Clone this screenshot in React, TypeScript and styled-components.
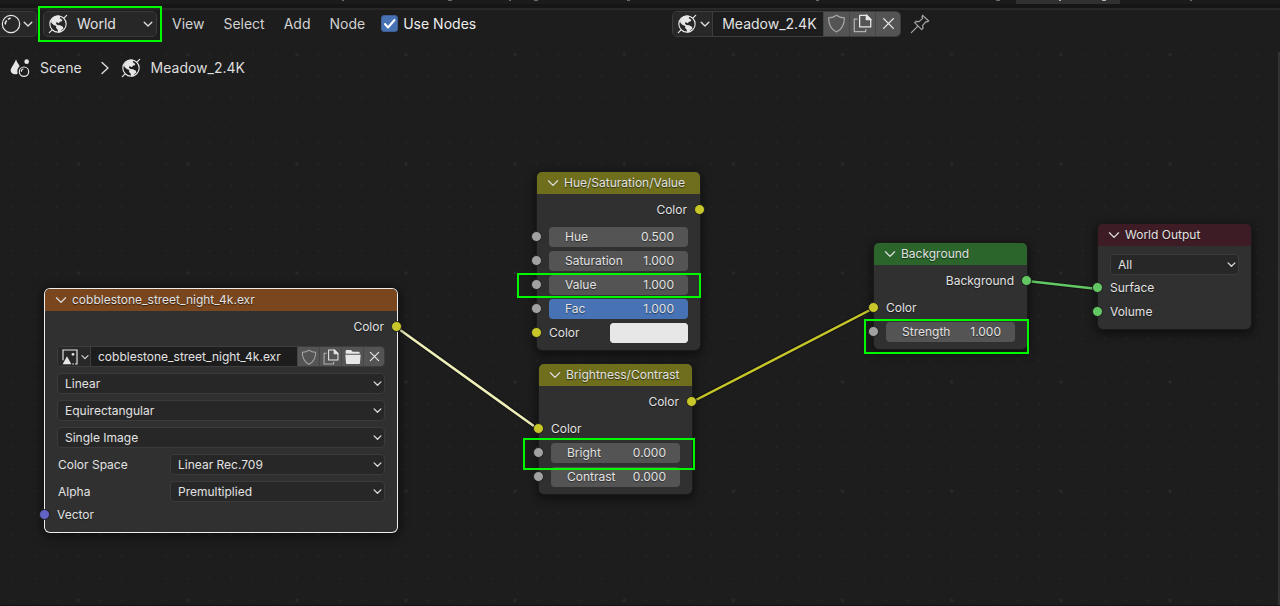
import React, { useId } from "react";
import styled, { createGlobalStyle, css } from "styled-components";

const font = `Inter, "Liberation Sans", sans-serif`;

const GlobalStyle = createGlobalStyle`
  *, *::before, *::after { box-sizing: border-box; }
  body { margin: 0; background: #1d1d1d; overflow: hidden; }
  button, input, select { font: inherit; color: inherit; margin: 0; }
`;

const Screen = styled.div`
  display: flex;
  flex-direction: column;
  min-height: 100vh;
  overflow: hidden;
  background: #161616;
  color: #e2e2e2;
  font: 14px/20px ${font};
`;

const WorkspaceStrip = styled.div`
  height: 4px;
  margin-bottom: 4px;
  background: #1b1b1b;
  svg { display: block; }
`;

const Editor = styled.main`
  flex: 1;
  display: flex;
  flex-direction: column;
  background: #1d1d1d;
  border-top: 2px solid #282828;
  border-bottom: 1px solid #141114;
`;

const Toolbar = styled.header`
  display: flex;
  align-items: center;
  height: 30px;
  padding-bottom: 3px;
`;

const EditorTypeButton = styled.button`
  display: flex;
  align-items: center;
  gap: 2px;
  width: 37px;
  height: 26px;
  padding: 0 2px 0 1px;
  border: 1px solid #3a3a3a;
  border-left: 0;
  border-radius: 0 5px 5px 0;
  background: #282828;
`;

const ShaderType = styled.div`
  position: relative;
  width: 114px;
  margin-left: 6px;
`;

const SelectBox = styled.select<{ $large?: boolean }>`
  display: block;
  width: 100%;
  height: ${(p) => (p.$large ? 26 : 21)}px;
  padding: ${(p) => (p.$large ? "0 20px 0 33px" : "0 20px 0 7px")};
  border: 1px solid ${(p) => (p.$large ? "#3a3a3a" : "#3b3b3b")};
  border-radius: ${(p) => (p.$large ? 5 : 4)}px;
  background: #272727;
  appearance: none;
  outline: 0;
`;

const SelectWrap = styled.div`
  position: relative;
  flex: 1;
`;

const Arrow = styled.span<{ $right: number }>`
  position: absolute;
  right: ${(p) => p.$right}px;
  top: 0;
  bottom: 0;
  display: flex;
  align-items: center;
  pointer-events: none;
`;

const LeadIcon = styled.span`
  position: absolute;
  left: 5px;
  top: 0;
  bottom: 0;
  display: flex;
  align-items: center;
  pointer-events: none;
`;

const MenuBar = styled.nav`
  display: flex;
  gap: 19px;
  margin-left: 15px;
`;

const MenuButton = styled.button`
  padding: 0;
  border: 0;
  background: none;
  color: #d2d2d2;
`;

const CheckLabel = styled.label`
  display: flex;
  align-items: center;
  gap: 5px;
  margin-left: 16px;
  color: #ededed;
`;

const CheckHolder = styled.span`
  position: relative;
  display: flex;
  svg {
    position: absolute;
    left: 0;
    top: 0;
    pointer-events: none;
  }
`;

const CheckInput = styled.input`
  width: 17px;
  height: 17px;
  appearance: none;
  border: 1px solid #3f5f92;
  border-radius: 3px;
  background: #4772b3;
`;

const DataBlock = styled.div<{ $large?: boolean }>`
  display: flex;
  height: ${(p) => (p.$large ? 26 : 21)}px;
  border: 1px solid #3d3d3d;
  border-radius: ${(p) => (p.$large ? 5 : 4)}px;
  background: #1d1d1d;
  overflow: hidden;
  ${(p) => p.$large && css`width: 229px; margin-left: 196px;`}
`;

const BrowseButton = styled.button<{ $width: number }>`
  display: flex;
  align-items: center;
  gap: 3px;
  flex: none;
  width: ${(p) => p.$width}px;
  padding: 0 0 0 4px;
  border: 0;
  border-right: 1px solid #3d3d3d;
  background: #282828;
`;

const NameInput = styled.input<{ $pad: number }>`
  flex: 1;
  min-width: 0;
  padding: 0 0 0 ${(p) => p.$pad}px;
  border: 0;
  outline: 0;
  background: transparent;
`;

const BlockButton = styled.button<{ $width: number }>`
  display: flex;
  align-items: center;
  justify-content: center;
  flex: none;
  width: ${(p) => p.$width}px;
  padding: 0;
  border: 0;
  border-left: 1px solid #464646;
  background: #545454;
`;

const PinButton = styled.button`
  display: flex;
  margin-left: 9px;
  padding: 0;
  border: 0;
  background: none;
`;

const Canvas = styled.section`
  position: relative;
  flex: 1;
  overflow: hidden;
  font-size: 12px;
`;

const Backdrop = styled.svg`
  position: absolute;
  left: 0;
  top: 0;
  width: 100%;
  height: 100%;
`;

const Breadcrumb = styled.nav`
  position: relative;
  display: flex;
  align-items: center;
  padding: 18px 0 0 10px;
  font-size: 14px;
`;

const Crumb = styled.a`
  display: flex;
  align-items: center;
  gap: 10px;
  color: #dedede;
  text-decoration: none;
`;

const CrumbArrow = styled.span`
  display: flex;
  margin: 0 11px 0 18px;
`;

const SideScroll = styled.div`
  position: absolute;
  right: 0;
  top: 12px;
  bottom: 0;
  width: 2px;
  background: #333;
`;

const NodeBox = styled.article<{ $x: number; $y: number; $w: number; $selected?: boolean }>`
  position: absolute;
  left: ${(p) => p.$x}px;
  top: ${(p) => p.$y}px;
  width: ${(p) => p.$w}px;
  padding-bottom: 5px;
  border-radius: 5px;
  background: #303030;
  box-shadow: ${(p) =>
    p.$selected
      ? "0 0 0 1px #ededed, 0 2px 10px 3px rgba(0,0,0,.5)"
      : "0 0 0 1px #1a1a1a, 0 3px 10px 2px rgba(0,0,0,.5)"};
`;

const NodeHeader = styled.h2<{ $color: string }>`
  display: flex;
  align-items: center;
  gap: 5px;
  height: 22px;
  margin: 0 0 4px;
  padding-left: 10px;
  border-radius: 5px 5px 0 0;
  background: ${(p) => p.$color};
  font-size: 12px;
  font-weight: 400;
  text-shadow: 0 1px 1px rgba(0, 0, 0, 0.6);
`;

const CollapseButton = styled.button`
  display: flex;
  padding: 0;
  border: 0;
  background: none;
`;

const Row = styled.div<{ $output?: boolean }>`
  position: relative;
  display: flex;
  align-items: center;
  justify-content: ${(p) => (p.$output ? "flex-end" : "flex-start")};
  height: 24px;
  margin-bottom: ${(p) => (p.$output ? 3 : 0)}px;
  padding: 0 12px;
  text-shadow: 0 1px 1px rgba(0, 0, 0, 0.5);
`;

const Socket = styled.span<{ $color: string; $output?: boolean }>`
  position: absolute;
  ${(p) => (p.$output ? "right: -5px;" : "left: -6px;")}
  top: 6px;
  width: 11px;
  height: 11px;
  border: 1px solid #1c1c1c;
  border-radius: 50%;
  background: ${(p) => p.$color};
`;

const RowLabel = styled.span<{ $output?: boolean }>`
  ${(p) => p.$output && "padding-right: 1px;"}
`;

const NumberField = styled.label<{ $filled?: boolean }>`
  display: flex;
  flex: 1;
  align-items: center;
  justify-content: space-between;
  height: 20px;
  padding: 0 14px 0 16px;
  border-radius: 4px;
  background: ${(p) => (p.$filled ? "#4772b3" : "#545454")};
`;

const NumberInput = styled.input`
  width: 44px;
  padding: 0;
  border: 0;
  outline: 0;
  background: none;
  text-align: right;
  text-shadow: inherit;
`;

const ColorLabel = styled.label`
  display: flex;
  flex: 1;
  align-items: center;
  justify-content: space-between;
`;

const ColorInput = styled.input`
  width: 78px;
  height: 20px;
  padding: 0;
  border: 0;
  border-radius: 4px;
  background: #e7e7e7;
  appearance: none;
  &::-webkit-color-swatch-wrapper { padding: 0; }
  &::-webkit-color-swatch { border: 0; border-radius: 4px; }
`;

const Controls = styled.div`
  display: flex;
  flex-direction: column;
  gap: 6px;
  padding: 4px 12px 1px;
`;

const Setting = styled.div`
  display: flex;
  align-items: center;
`;

const SettingLabel = styled.label`
  width: 113px;
  padding-left: 1px;
`;

const Highlight = styled.div<{ $x: number; $y: number; $w: number; $h: number }>`
  position: absolute;
  left: ${(p) => p.$x}px;
  top: ${(p) => p.$y}px;
  width: ${(p) => p.$w}px;
  height: ${(p) => p.$h}px;
  border: 2px solid #00f800;
  pointer-events: none;
`;

const Chevron = ({ w = 9, stroke = 1.4 }: { w?: number; stroke?: number }) => (
  <svg width={w} height={w} viewBox="0 0 10 10" fill="none" stroke="#dcdcdc" strokeWidth={stroke} strokeLinecap="round" strokeLinejoin="round">
    <path d="M1.2 3.2 5 7l3.800-3.800" />
  </svg>
);

const WorldIcon = () => (
  <svg width="20" height="20" viewBox="0 0 60 60" fill="none">
    <circle cx="30" cy="30" r="24.500" stroke="#e6e6e6" strokeWidth="3.400" />
    <path d="M4 56 11 49M49 11l7-7" stroke="#e6e6e6" strokeWidth="3.600" strokeLinecap="round" />
    <path
      fill="#e6e6e6"
      d="M9 19 16 11C22 6 30 4 38 7l-3 6 5 2 3 6-7 2-4 5-6-4-2 5 4 4 8 1 9 4 1 6-6 4-3 7-6 1-2-9-5-6 1-5-8-3-7-7Z"
    />
  </svg>
);

const SphereIcon = () => (
  <svg width="20" height="20" viewBox="0 0 60 60" fill="none" stroke="#e6e6e6" strokeWidth="3.600" strokeLinecap="round">
    <circle cx="30" cy="30" r="26" />
    <path d="M13 29c0-3 1-6 3-8" strokeWidth="5" />
    <path d="M22 15c2-1 3-1 5-2" strokeWidth="5" />
  </svg>
);

const SceneIcon = () => (
  <svg width="20" height="20" viewBox="0 0 60 60" fill="none">
    <path fill="#e6e6e6" d="M18 4c2 8 8 14 11 21-6 5-9 13-6 22-10 4-20 0-21-8C1 30 14 18 18 4Z" />
    <circle cx="50" cy="11" r="7" fill="#e6e6e6" />
    <circle cx="42" cy="41" r="14" stroke="#e6e6e6" strokeWidth="3.600" />
    <path d="M34 40c0-4 2-6 5-7" stroke="#e6e6e6" strokeWidth="3.600" strokeLinecap="round" />
  </svg>
);

const ShieldIcon = ({ s }: { s: number }) => (
  <svg width={s} height={s} viewBox="0 0 60 60" fill="none" stroke="#a6a6a6" strokeWidth="3.800" strokeLinejoin="round">
    <path d="M30 4c7 6 15 8 25 8 0 22-6 36-25 45C11 48 5 34 5 12c10 0 18-2 25-8Z" />
  </svg>
);

const CopyIcon = ({ s }: { s: number }) => (
  <svg width={s} height={s} viewBox="0 0 60 60" fill="none" stroke="#e6e6e6" strokeWidth="4" strokeLinejoin="round">
    <path d="M21 4h22l13 13v24H21Z" />
    <path d="M42 3v15h15Z" fill="#e6e6e6" />
    <path d="M14 16H4v40h36v-8" stroke="#b0b0b0" />
  </svg>
);

const CloseIcon = ({ s }: { s: number }) => (
  <svg width={s} height={s} viewBox="0 0 12 12" stroke="#e6e6e6" strokeWidth="1.300" strokeLinecap="round">
    <path d="m1.500 1.500 9 9M10.500 1.500l-9 9" />
  </svg>
);

const FolderIcon = () => (
  <svg width="16" height="16" viewBox="0 0 48 48" fill="#e6e6e6">
    <path d="M2 6c0-2 1-3 3-3h13l5 5h18c2 0 3 1 3 3v3H2ZM1 17h46l-2 25c0 2-1 3-3 3H6c-2 0-3-1-3-3Z" />
  </svg>
);

const ImageIcon = () => (
  <svg width="16" height="16" viewBox="0 0 48 48" fill="none">
    <path d="M3 34V3h42v42h-6" stroke="#e6e6e6" strokeWidth="3.500" />
    <path d="M2 46 15 22l13 24Z" fill="#e6e6e6" />
    <circle cx="33" cy="16" r="4" fill="#e6e6e6" />
    <path d="M31 45h5" stroke="#e6e6e6" strokeWidth="3.500" />
  </svg>
);

const PinIcon = () => (
  <svg width="20" height="20" viewBox="0 0 60 60" fill="none" stroke="#a8a8a8" strokeWidth="3.600" strokeLinejoin="round" strokeLinecap="round">
    <path d="M38 4 56 21l-5 3-3-1-10 11 1 9-4 4L14 26l4-4 9 1 11-10-2-4Z" />
    <path d="M23 37 4 56" />
  </svg>
);

type DropdownProps = { label?: string; name: string; value: string };

function Dropdown({ label, name, value }: DropdownProps) {
  const id = useId();
  return (
    <Setting>
      {label && <SettingLabel htmlFor={id}>{label}</SettingLabel>}
      <SelectWrap>
        <SelectBox id={id} aria-label={label ? undefined : name} defaultValue={value}>
          <option>{value}</option>
        </SelectBox>
        <Arrow $right={3}><Chevron /></Arrow>
      </SelectWrap>
    </Setting>
  );
}

const YELLOW = "#c7c729";
const GREY = "#a1a1a1";
const GREEN = "#63c763";

function Output({ label, color }: { label: string; color: string }) {
  return (
    <Row $output>
      <RowLabel $output>{label}</RowLabel>
      <Socket $color={color} $output />
    </Row>
  );
}

function Input({ label, color }: { label: string; color: string }) {
  return (
    <Row>
      <Socket $color={color} />
      <RowLabel>{label}</RowLabel>
    </Row>
  );
}

function NumberRow({ label, value, filled }: { label: string; value: string; filled?: boolean }) {
  return (
    <Row>
      <Socket $color={GREY} />
      <NumberField $filled={filled}>
        {label}
        <NumberInput defaultValue={value} />
      </NumberField>
    </Row>
  );
}

type NodeProps = {
  title: string;
  color: string;
  x: number;
  y: number;
  w: number;
  selected?: boolean;
  children: React.ReactNode;
};

function Node({ title, color, x, y, w, selected, children }: NodeProps) {
  return (
    <NodeBox $x={x} $y={y} $w={w} $selected={selected}>
      <NodeHeader $color={color}>
        <CollapseButton aria-label={`Collapse ${title}`}><Chevron w={12} stroke={1.1} /></CollapseButton>
        {title}
      </NodeHeader>
      {children}
    </NodeBox>
  );
}

const GRID = 109.15;
const STEP = GRID / 5;

function Grid() {
  const minor = [0, 1, 2, 3, 4].flatMap((r) => [0, 1, 2, 3, 4].map((c) => [c, r]));
  return (
    <Backdrop aria-hidden="true">
      <defs>
        <pattern id="dots" width={GRID} height={GRID} x="67.5" y="3.5" patternUnits="userSpaceOnUse">
          {minor.map(([c, r]) => (
            <circle
              key={`${c}-${r}`}
              cx={11 + c * STEP}
              cy={11 + r * STEP}
              r={c === 0 && r === 0 ? 1.6 : 0.9}
              fill={c === 0 && r === 0 ? "#2b2b2b" : "#282828"}
            />
          ))}
        </pattern>
      </defs>
      <rect width="100%" height="100%" fill="url(#dots)" />
      <g strokeLinecap="round" stroke="#141414" strokeWidth="4.500">
        <path d="M396 287 538 389M692 362 874 268M1027 241 1098 249" />
      </g>
      <g strokeLinecap="round" strokeWidth="2.500">
        <path d="M396 287 538 389" stroke="#efefb9" />
        <path d="M692 362 874 268" stroke={YELLOW} />
        <path d="M1027 241 1098 249" stroke={GREEN} />
      </g>
    </Backdrop>
  );
}

export default function App() {
  return (
    <Screen>
      <GlobalStyle />
      <WorkspaceStrip>
        <svg width="1280" height="4" aria-hidden="true">
          <path d="M1016 0h104v4h-104z" fill="#303030" />
          <path
            d="M342 0h2v1h-2zM448 0h4v1h-4zM509 0h2v1h-2zM534 0h4v1h-4zM627 0h3v1h-3zM816 0h3v1h-3zM996 0h4v1h-4zM1190 0h2v1h-2z"
            fill="#6a6a6a"
          />
          <path d="M1059 0h2v1h-2zM1102 0h4v1h-4z" fill="#b0b0b0" />
        </svg>
      </WorkspaceStrip>
      <Editor>
        <Toolbar>
          <EditorTypeButton aria-label="Editor type"><SphereIcon /><Chevron w={10} /></EditorTypeButton>
          <ShaderType>
            <SelectBox $large aria-label="Shader type" defaultValue="World">
              <option>World</option>
            </SelectBox>
            <LeadIcon><WorldIcon /></LeadIcon>
            <Arrow $right={4}><Chevron w={10} /></Arrow>
            <Highlight $x={-5} $y={-5} $w={124} $h={36} />
          </ShaderType>
          <MenuBar>
            <MenuButton>View</MenuButton>
            <MenuButton>Select</MenuButton>
            <MenuButton>Add</MenuButton>
            <MenuButton>Node</MenuButton>
          </MenuBar>
          <CheckLabel>
            <CheckHolder>
              <CheckInput type="checkbox" defaultChecked />
              <svg width="17" height="17" viewBox="0 0 17 17" fill="none" stroke="#fff" strokeWidth="2" strokeLinecap="round" strokeLinejoin="round">
                <path d="m4 9 3 3.500 6.500-7.500" />
              </svg>
            </CheckHolder>
            Use Nodes
          </CheckLabel>
          <DataBlock $large>
            <BrowseButton $width={40} aria-label="Browse world"><WorldIcon /><Chevron w={10} /></BrowseButton>
            <NameInput $pad={9} aria-label="World name" defaultValue="Meadow_2.4K" />
            <BlockButton $width={26} aria-label="Fake user"><ShieldIcon s={19} /></BlockButton>
            <BlockButton $width={26} aria-label="New world"><CopyIcon s={19} /></BlockButton>
            <BlockButton $width={25} aria-label="Unlink world"><CloseIcon s={13} /></BlockButton>
          </DataBlock>
          <PinButton aria-label="Pin"><PinIcon /></PinButton>
        </Toolbar>

        <Canvas>
          <Grid />
          <Breadcrumb aria-label="Context">
            <Crumb href="#scene"><SceneIcon />Scene</Crumb>
            <CrumbArrow>
              <svg width="10" height="14" viewBox="0 0 10 14" fill="none" stroke="#dcdcdc" strokeWidth="1.400" strokeLinecap="round" strokeLinejoin="round">
                <path d="m2 1.500 6 5.500-6 5.500" />
              </svg>
            </CrumbArrow>
            <Crumb href="#world"><WorldIcon />Meadow_2.4K</Crumb>
          </Breadcrumb>

          <Node title="cobblestone_street_night_4k.exr" color="#79461d" x={45} y={249} w={352} selected>
            <Output label="Color" color={YELLOW} />
            <Controls>
              <DataBlock>
                <BrowseButton $width={33} aria-label="Browse image"><ImageIcon /><Chevron w={8} /></BrowseButton>
                <NameInput $pad={7} aria-label="Image name" defaultValue="cobblestone_street_night_4k.exr" />
                <BlockButton $width={22} aria-label="Fake user"><ShieldIcon s={16} /></BlockButton>
                <BlockButton $width={22} aria-label="New image"><CopyIcon s={16} /></BlockButton>
                <BlockButton $width={22} aria-label="Open image"><FolderIcon /></BlockButton>
                <BlockButton $width={21} aria-label="Unlink image"><CloseIcon s={11} /></BlockButton>
              </DataBlock>
              <Dropdown name="Interpolation" value="Linear" />
              <Dropdown name="Projection" value="Equirectangular" />
              <Dropdown name="Source" value="Single Image" />
              <Dropdown label="Color Space" name="Color Space" value="Linear Rec.709" />
              <Dropdown label="Alpha" name="Alpha" value="Premultiplied" />
            </Controls>
            <Input label="Vector" color="#6363c7" />
          </Node>

          <Node title="Hue/Saturation/Value" color="#6e6e1d" x={537} y={132} w={163}>
            <Output label="Color" color={YELLOW} />
            <NumberRow label="Hue" value="0.500" />
            <NumberRow label="Saturation" value="1.000" />
            <NumberRow label="Value" value="1.000" />
            <NumberRow label="Fac" value="1.000" filled />
            <Row>
              <Socket $color={YELLOW} />
              <ColorLabel>
                Color
                <ColorInput type="color" defaultValue="#e7e7e7" />
              </ColorLabel>
            </Row>
          </Node>

          <Node title="Brightness/Contrast" color="#6e6e1d" x={539} y={324} w={153}>
            <Output label="Color" color={YELLOW} />
            <Input label="Color" color={YELLOW} />
            <NumberRow label="Bright" value="0.000" />
            <NumberRow label="Contrast" value="0.000" />
          </Node>

          <Node title="Background" color="#2b652b" x={874} y={203} w={153}>
            <Output label="Background" color={GREEN} />
            <Input label="Color" color={YELLOW} />
            <NumberRow label="Strength" value="1.000" />
          </Node>

          <Node title="World Output" color="#3e1c26" x={1098} y={184} w={153}>
            <Controls>
              <Dropdown name="Target" value="All" />
            </Controls>
            <Input label="Surface" color={GREEN} />
            <Input label="Volume" color={GREEN} />
          </Node>

          <Highlight $x={517} $y={233} $w={184} $h={25} />
          <Highlight $x={523} $y={398} $w={172} $h={32} />
          <Highlight $x={864} $y={279} $w={165} $h={35} />
          <SideScroll />
        </Canvas>
      </Editor>
    </Screen>
  );
}
